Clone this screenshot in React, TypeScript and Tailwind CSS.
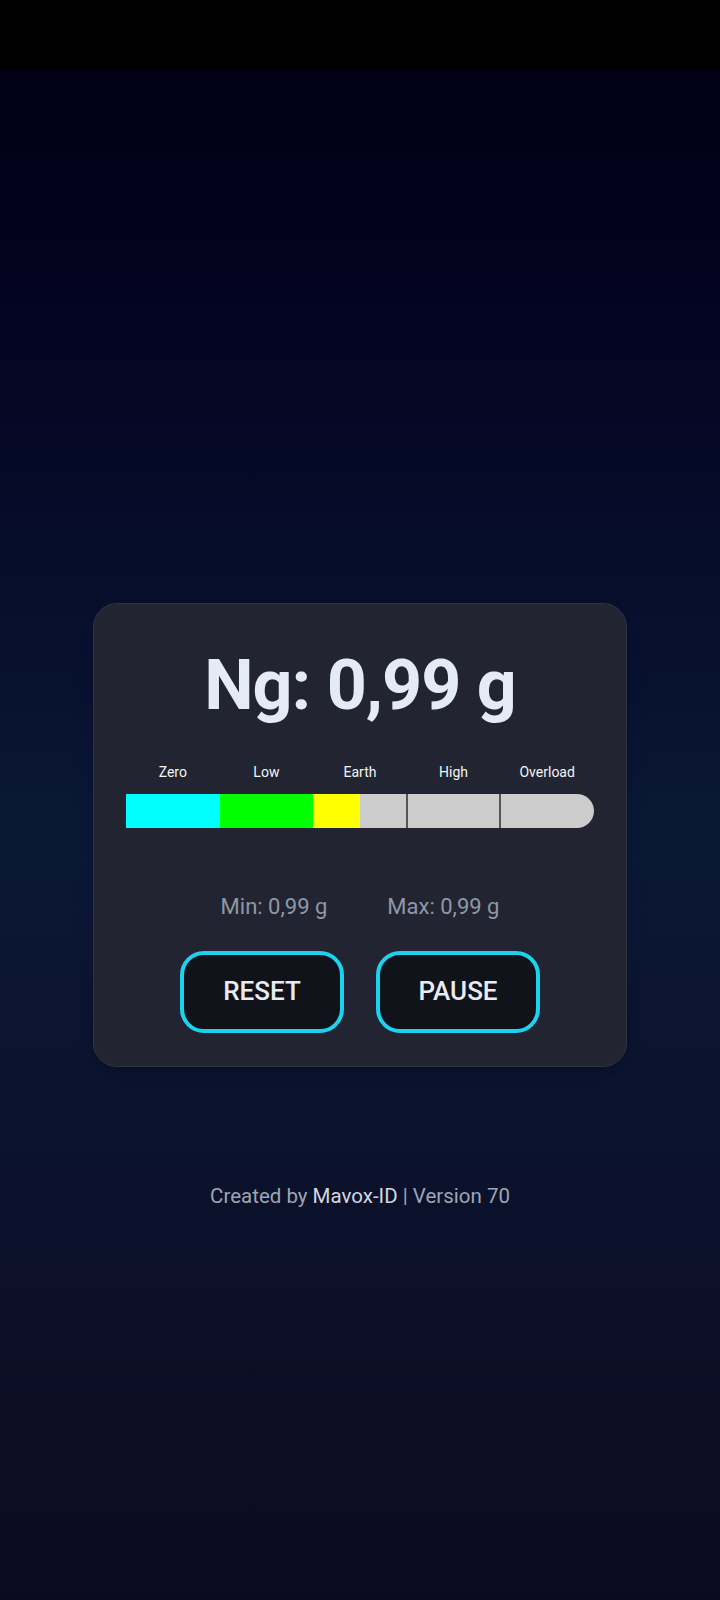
export default function App() {
  const labels = ["Zero", "Low", "Earth", "High", "Overload"]

  return (
    <div className="flex min-h-[1600px] w-full flex-col font-['Roboto',sans-serif]">
      <div className="h-[69px] w-full bg-black"></div>
      <main className="grid flex-1 grid-rows-[1fr_auto_1fr] justify-items-center bg-gradient-to-b from-[#020017] via-[#0a1836] to-[#0c0a20]">
        <div></div>

        <section className="w-[534px] rounded-3xl border border-[#30343f] bg-[#222531] px-8 pt-[46px] pb-[33px] shadow-xl">
          <h1 className="text-center text-[70px] font-bold leading-none tracking-[-1px] text-[#e5ebf5]">Ng: 0,99 g</h1>

          <div className="mt-[42px] grid grid-cols-5 text-center text-sm leading-5 text-[#f3f4f6]">
            {labels.map((label) => (
              <span key={label}>{label}</span>
            ))}
          </div>

          <div className="relative mt-3 flex h-[34px] w-full overflow-hidden rounded-r-full bg-[#cccccc]">
            <div className="h-full w-[20%] bg-[#00ffff]"></div>
            <div className="h-full w-[20%] bg-[#00ff00]"></div>
            <div className="h-full w-[10%] bg-[#ffff00]"></div>
            <div className="absolute top-0 left-[60%] h-full w-[2px] -translate-x-1/2 bg-[#555555]"></div>
            <div className="absolute top-0 left-[80%] h-full w-[2px] -translate-x-1/2 bg-[#555555]"></div>
          </div>

          <div className="mt-[62px] flex justify-center gap-[60px] text-[22px] leading-[33px] text-[#8f97a6]">
            <span>Min: 0,99 g</span>
            <span>Max: 0,99 g</span>
          </div>

          <div className="mt-[28px] flex justify-center gap-8">
            <button className="h-[82px] w-[164px] rounded-3xl border-4 border-[#1cd3ee] bg-[#11131a] text-[26px] font-medium text-[#e8ebf2]">
              RESET
            </button>
            <button className="h-[82px] w-[164px] rounded-3xl border-4 border-[#1cd3ee] bg-[#11131a] text-[26px] font-medium text-[#e8ebf2]">
              PAUSE
            </button>
          </div>
        </section>

        <div className="pt-[115px]">
          <p className="text-[20.5px] leading-7 text-[#9ea5b3]">
            Created by <span className="text-[#d3d7df]">Mavox-ID</span> | Version 70
          </p>
        </div>
      </main>
    </div>
  )
}
